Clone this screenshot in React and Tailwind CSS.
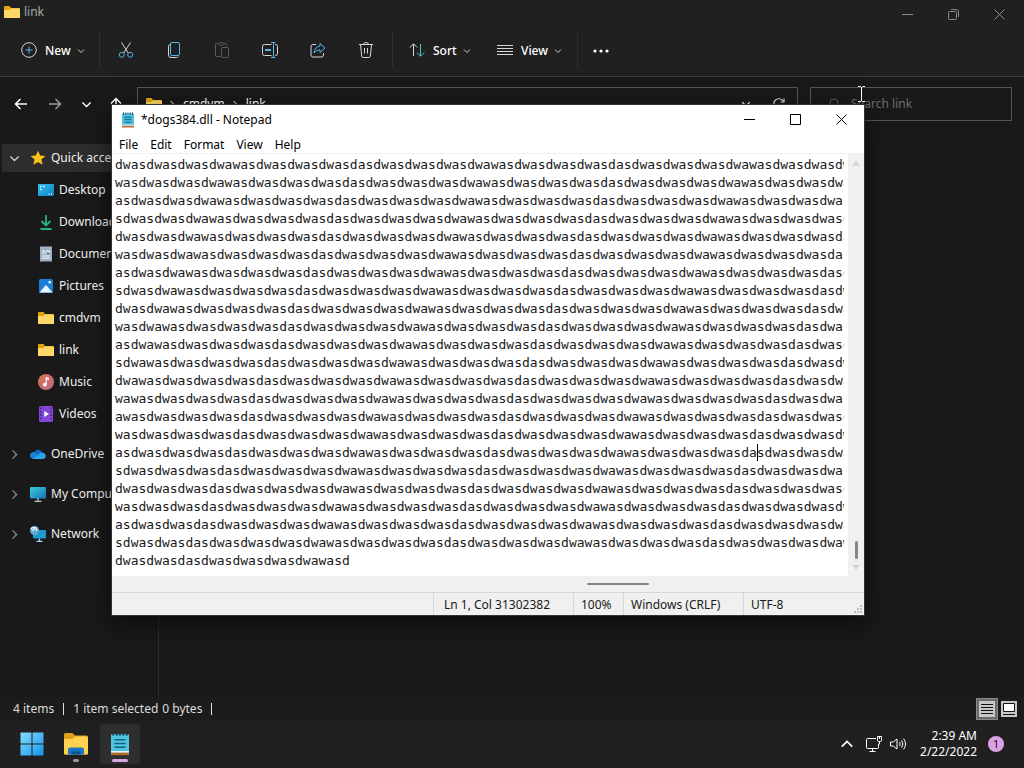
import React, { useState } from 'react'

const PATTERN = 'dwasdwasdwasdwawasdwasdwasdwasdas'

// every wrapped line starts one character further into the pattern
const buildLines = () => {
  const stream = PATTERN.repeat(5)
  const lines = []
  for (let i = 0; i < 22; i++) {
    lines.push(stream.slice(i, i + 96))
  }
  lines.push(stream.slice(22, 52))
  return lines.join('\n')
}

const FolderIcon = () => (
  <svg width="16" height="16" viewBox="0 0 16 16" className="shrink-0">
    <path d="M0 3a1 1 0 0 1 1-1h4.5L7 4h8a1 1 0 0 1 1 1v8a1 1 0 0 1-1 1H1a1 1 0 0 1-1-1z" fill="#e5a50f" />
    <path d="M0 6h5.5L7.2 4.4H15a1 1 0 0 1 1 1V13a1 1 0 0 1-1 1H1a1 1 0 0 1-1-1z" fill="#ffd968" />
  </svg>
)

const Chevron = ({ dir = 'down', size = 8, color = '#cfcfcf' }) => {
  const paths = {
    down: 'M1 2.5 4 5.5 7 2.5',
    right: 'M2.5 1 5.5 4 2.5 7',
    up: 'M1 5.5 4 2.5 7 5.5',
  }
  return (
    <svg width={size} height={size} viewBox="0 0 8 8" fill="none" stroke={color} className="shrink-0">
      <path d={paths[dir]} />
    </svg>
  )
}

const StarIcon = () => (
  <svg width="16" height="16" viewBox="0 0 16 16" className="shrink-0">
    <path d="m8 .8 2.1 4.8 5.3.5-4 3.5 1.2 5.2L8 12.1l-4.6 2.7 1.2-5.2-4-3.5 5.3-.5z" fill="#fcc419" />
  </svg>
)

const DesktopIcon = () => (
  <svg width="16" height="16" viewBox="0 0 16 16" className="shrink-0">
    <defs>
      <linearGradient id="desk" x1="0" y1="0" x2="1" y2="1">
        <stop offset="0" stopColor="#35c0ee" />
        <stop offset="1" stopColor="#0e7fc4" />
      </linearGradient>
    </defs>
    <rect y="2" width="16" height="12" rx="1" fill="url(#desk)" />
    <path d="M2 4.5h1.500M2 7.500h1.500M5 4.500h1.500M10.500 12h1M13 12h1" stroke="#e8faff" strokeWidth="1.300" />
  </svg>
)

const DownloadsIcon = () => (
  <svg width="16" height="16" viewBox="0 0 16 16" fill="none" stroke="#27b47c" strokeWidth="1.800" className="shrink-0">
    <path d="M8 1v10M3.500 7 8 11.400 12.500 7M2.500 15h11" />
  </svg>
)

const DocumentsIcon = () => (
  <svg width="16" height="16" viewBox="0 0 16 16" className="shrink-0">
    <path d="M2 .5h12v15H2z" fill="#9db2c6" />
    <path d="M4 5h3.500M4 7h3.500M4 10h8M4 12.200h8" stroke="#f4f8fb" />
    <path d="M8.500 4.500h3.500v3.500H8.500z" fill="#e9f1f7" />
    <path d="M9 6.500h2.500V8H9z" fill="#40607c" />
  </svg>
)

const PicturesIcon = () => (
  <svg width="16" height="16" viewBox="0 0 16 16" className="shrink-0">
    <rect x="1" y="1" width="14" height="14" rx="1.500" fill="#1b7fd4" />
    <path d="m1.500 14.600 5.700-6.800a1 1 0 0 1 1.600 0l5.700 6.800z" fill="#e9f6ff" />
    <circle cx="11.700" cy="4.300" r="1.300" fill="#fff" />
  </svg>
)

const MusicIcon = () => (
  <svg width="16" height="16" viewBox="0 0 16 16" className="shrink-0">
    <defs>
      <linearGradient id="music" x1="0" y1="0" x2="1" y2="1">
        <stop offset="0" stopColor="#e0714c" />
        <stop offset="1" stopColor="#b76a8e" />
      </linearGradient>
    </defs>
    <circle cx="8" cy="8" r="8" fill="url(#music)" />
    <path d="M8.200 3v7.200" stroke="#fff" strokeWidth="1.200" />
    <path d="M8 3l3 1v2L8 5z" fill="#fff" />
    <circle cx="6.800" cy="10.700" r="1.900" fill="#fff" />
  </svg>
)

const VideosIcon = () => (
  <svg width="16" height="16" viewBox="0 0 16 16" className="shrink-0">
    <rect x="1" width="14" height="16" rx="1.500" fill="#8347d6" />
    <path d="M3 1.500v13M13 1.500v13" stroke="#4a1f8c" strokeWidth="1.600" strokeDasharray="1.600 1.800" />
    <path d="M6.300 5v6l4.600-3z" fill="#fff" />
  </svg>
)

const OneDriveIcon = () => (
  <svg width="16" height="16" viewBox="0 0 16 16" className="shrink-0">
    <path d="M4.200 6.200A4.400 4.400 0 0 1 12.400 7L8 10 1 11a3.300 3.300 0 0 1 3.200-4.800z" fill="#0f6cbd" />
    <path d="M2 12.300 9.500 7.600A3.400 3.400 0 0 1 13 6.800a3.200 3.200 0 0 1 2 5.200 2.600 2.600 0 0 1-2 1H3.500A2.600 2.600 0 0 1 2 12.300z" fill="#2aa5ea" />
    <path d="M0 9.600a3.300 3.300 0 0 1 4.500-3.200l5 2.800L2 12.500A3.200 3.200 0 0 1 0 9.600z" fill="#1583d8" />
  </svg>
)

const ComputerIcon = () => (
  <svg width="16" height="16" viewBox="0 0 16 16" className="shrink-0">
    <defs>
      <linearGradient id="pc" x1="0" y1="0" x2="1" y2="1">
        <stop offset="0" stopColor="#3ccdd8" />
        <stop offset="1" stopColor="#1473b8" />
      </linearGradient>
    </defs>
    <rect y="1" width="16" height="11.500" rx="1" fill="url(#pc)" />
    <path d="M8 12v3M4.500 15.300h7" stroke="#b9c7cf" strokeWidth="1.300" />
  </svg>
)

const NetworkIcon = () => (
  <svg width="16" height="16" viewBox="0 0 16 16" className="shrink-0">
    <rect x="3" y="4" width="13" height="8.500" rx="1" fill="#1c9ad0" />
    <path d="M9.500 12.500v2.500M6.500 15.300h6" stroke="#a7dcef" strokeWidth="1.300" />
    <circle cx="4.500" cy="4.500" r="4.500" fill="#5fa9d6" />
    <path d="M1 3c1.500-2 3-2 3.500-1S3 3.500 2.500 5M6 .8c-1 2 1 2 .5 4" fill="none" stroke="#e9f6fc" strokeWidth="1.400" />
  </svg>
)

const NotepadIcon = ({ size = 16 }) => (
  <svg width={size} height={size} viewBox="0 0 16 16" className="shrink-0">
    <path d="M2 13h12v2.500H2z" fill="#b06a2a" />
    <path d="M2 1.500h12V13.500H2z" fill="#4fc3dd" />
    <path d="M2 13.200h12" stroke="#f1f7f9" />
    <path d="M3.500 .5v2M5.800.5v2M8 .5v2M10.300.5v2M12.500.5v2" stroke="#15405e" />
    <path d="M4.300 5.200h7.400M4.300 7.700h7.400M4.300 10.200h7.400" stroke="#11628a" />
  </svg>
)

const quickItems = [
  { name: 'Desktop', icon: <DesktopIcon /> },
  { name: 'Downloads', icon: <DownloadsIcon /> },
  { name: 'Documents', icon: <DocumentsIcon /> },
  { name: 'Pictures', icon: <PicturesIcon /> },
  { name: 'cmdvm', icon: <FolderIcon /> },
  { name: 'link', icon: <FolderIcon /> },
  { name: 'Music', icon: <MusicIcon /> },
  { name: 'Videos', icon: <VideosIcon /> },
]

const rootItems = [
  { name: 'OneDrive', icon: <OneDriveIcon /> },
  { name: 'My Computer', icon: <ComputerIcon /> },
  { name: 'Network', icon: <NetworkIcon /> },
]

const tools = [
  {
    name: 'Cut',
    icon: (
      <>
        <path d="M3.500.5 10.300 11M12.500.5 5.700 11" stroke="#d6d6d6" />
        <circle cx="3.800" cy="12.800" r="2.500" stroke="#58b6ea" />
        <circle cx="12.200" cy="12.800" r="2.500" stroke="#58b6ea" />
      </>
    ),
  },
  {
    name: 'Copy',
    icon: (
      <>
        <path d="M4 2.500a2 2 0 0 0-1.500 2v8.500a2.500 2.500 0 0 0 2.500 2.500h5.500a2 2 0 0 0 1.700-1" stroke="#d6d6d6" />
        <rect x="4.500" y=".5" width="9" height="13" rx="1.500" stroke="#58b6ea" />
      </>
    ),
  },
  {
    name: 'Paste',
    icon: (
      <g stroke="#5c5c5c">
        <path d="M6.500 14.500h-4a1 1 0 0 1-1-1v-11a1 1 0 0 1 1-1H4M10 1.500h1.500a1 1 0 0 1 1 1V4" />
        <rect x="4.500" y=".5" width="5" height="2.500" rx="1" />
        <rect x="7.500" y="5.500" width="7" height="10" rx="1" />
      </g>
    ),
  },
  {
    name: 'Rename',
    icon: (
      <>
        <path d="M9.500 2.500h-7a2 2 0 0 0-2 2v7a2 2 0 0 0 2 2h7M13 2.500h.5a2 2 0 0 1 2 2v7a2 2 0 0 1-2 2H13" stroke="#d6d6d6" />
        <path d="M9 .5h4.500M9 15.500h4.500M11.500.5v15" stroke="#58b6ea" />
        <path d="M3 8h6" stroke="#58b6ea" strokeWidth="2" />
      </>
    ),
  },
  {
    name: 'Share',
    icon: (
      <>
        <path d="M6 2.500H3a2 2 0 0 0-2 2V13a2 2 0 0 0 2 2h8.500a2 2 0 0 0 2-2v-2" stroke="#d6d6d6" />
        <path d="M10 1.500 15 6l-5 4.500V8C7 8 5.500 9 4 11c.3-4 2.500-6.500 6-7z" stroke="#58b6ea" strokeLinejoin="round" />
      </>
    ),
  },
  {
    name: 'Delete',
    icon: (
      <g stroke="#d6d6d6">
        <path d="M1 2.500h14M5.500 2.500a2.500 2 0 0 1 5 0M2.500 2.500l1.200 11.700a1.500 1.500 0 0 0 1.500 1.300h5.600a1.500 1.500 0 0 0 1.500-1.300L13.500 2.500M6.500 6v5.500M9.500 6v5.500" />
      </g>
    ),
  },
]

const Separator = () => <div className="h-9 w-px bg-[#2e2e2e]" />

const Explorer = () => {
  const [search, setSearch] = useState('')

  return (
    <main className="flex min-h-0 flex-1 flex-col bg-[#191919]">
      <header className="border-b border-[#3a3a3a] bg-[#202020]">
        <div className="flex h-6 items-start justify-between">
          <div className="flex h-6 items-center gap-1 pl-1 text-[#a8a8a8]">
            <FolderIcon />
            <span>link</span>
          </div>
          <div className="flex pr-[2px] text-[#8a8a8a]">
            <button aria-label="Minimize" className="flex h-7 w-[46px] items-center justify-center">
              <svg width="11" height="11" viewBox="0 0 11 11" stroke="currentColor"><path d="M0 5.500h11" /></svg>
            </button>
            <button aria-label="Restore" className="flex h-7 w-[46px] items-center justify-center">
              <svg width="11" height="11" viewBox="0 0 11 11" fill="none" stroke="currentColor">
                <rect x=".5" y="2.500" width="8" height="8" rx="1" />
                <path d="M3 .5h5.500a2 2 0 0 1 2 2V8" />
              </svg>
            </button>
            <button aria-label="Close" className="flex h-7 w-[46px] items-center justify-center">
              <svg width="11" height="11" viewBox="0 0 11 11" stroke="currentColor"><path d="m.5.5 10 10M10.500.5l-10 10" /></svg>
            </button>
          </div>
        </div>

        <div className="flex h-[52px] items-center pl-[13px] font-medium text-white">
          <button className="flex h-8 w-[86px] items-center gap-2 px-2">
            <svg width="16" height="16" viewBox="0 0 16 16" fill="none" className="shrink-0">
              <circle cx="8" cy="8" r="7.300" stroke="#d6d6d6" />
              <path d="M8 4.500v7M4.500 8h7" stroke="#58b6ea" />
            </svg>
            <span className="flex items-center gap-[6px] pt-[2px]">New <Chevron /></span>
          </button>
          <Separator />
          <div className="flex px-[2px]">
            {tools.map((tool) => (
              <button key={tool.name} aria-label={tool.name} className="flex h-8 w-12 items-center justify-center">
                <svg width="16" height="16" viewBox="0 0 16 16" fill="none">{tool.icon}</svg>
              </button>
            ))}
          </div>
          <Separator />
          <button className="ml-2 flex h-8 w-[88px] items-center gap-2 px-2">
            <svg width="16" height="16" viewBox="0 0 16 16" fill="none" className="shrink-0">
              <path d="M4.500 14V2M.8 5.500 4.500 1.800l3.700 3.700" stroke="#d6d6d6" />
              <path d="M11.500 2v12M7.800 10.500l3.700 3.700 3.700-3.700" stroke="#4cc2d8" />
            </svg>
            <span className="flex items-center gap-[6px] pt-[2px]">Sort <Chevron /></span>
          </button>
          <button className="flex h-8 w-[88px] items-center gap-2 px-2">
            <svg width="16" height="16" viewBox="0 0 16 16" stroke="#d6d6d6" className="shrink-0">
              <path d="M0 3.500h16M0 6.500h16M0 9.500h16M0 12.500h16" />
            </svg>
            <span className="flex items-center gap-[6px] pt-[2px]">View <Chevron /></span>
          </button>
          <Separator />
          <button aria-label="See more" className="flex h-8 w-[46px] items-center justify-center">
            <svg width="16" height="16" viewBox="0 0 16 16" fill="#fff">
              <circle cx="2" cy="9" r="1.600" />
              <circle cx="8" cy="9" r="1.600" />
              <circle cx="14" cy="9" r="1.600" />
            </svg>
          </button>
        </div>
      </header>

      <div className="flex h-11 items-end pr-3">
        <nav className="flex h-[34px] items-center pr-[7px] pl-1">
          <button aria-label="Back" className="flex h-8 w-[34px] items-center justify-center">
            <svg width="14" height="14" viewBox="0 0 14 14" fill="none" stroke="#fff" strokeWidth="1.500"><path d="M13 7H1.500M6.500 2l-5 5 5 5" /></svg>
          </button>
          <button aria-label="Forward" className="flex h-8 w-[34px] items-center justify-center">
            <svg width="14" height="14" viewBox="0 0 14 14" fill="none" stroke="#9a9a9a" strokeWidth="1.500"><path d="M1 7h11.500M7.500 2l5 5-5 5" /></svg>
          </button>
          <button aria-label="Recent locations" className="flex h-8 w-[29px] items-center justify-center">
            <Chevron size={11} color="#fff" />
          </button>
          <button aria-label="Up" className="flex h-8 w-[29px] items-center justify-center">
            <svg width="14" height="14" viewBox="0 0 14 14" fill="none" stroke="#fff" strokeWidth="1.500"><path d="M7 13V1.500M2 6.500l5-5 5 5" /></svg>
          </button>
        </nav>
        <div className="flex h-[34px] flex-1 items-center justify-between border border-[#555] pr-3 pl-2 text-white">
          <div className="flex items-center gap-[6px]">
            <FolderIcon />
            <Chevron dir="right" color="#fff" />
            <a href="#cmdvm" className="pl-px">cmdvm</a>
            <Chevron dir="right" color="#fff" />
            <a href="#link" className="pl-px">link</a>
          </div>
          <div className="flex items-center gap-[22px]">
            <button aria-label="Previous locations"><Chevron size={10} color="#fff" /></button>
            <button aria-label="Refresh">
              <svg width="12" height="12" viewBox="0 0 12 12" fill="none" stroke="#e0e0e0" strokeWidth="1.200">
                <path d="M10.500 7.500A5 5 0 1 1 10 3M11 .5V4H7.500" />
              </svg>
            </button>
          </div>
        </div>
        <label className="ml-3 flex h-[34px] w-[202px] items-center gap-3 border border-[#555] pl-4">
          <svg width="12" height="12" viewBox="0 0 12 12" fill="none" stroke="#5e5e5e" className="shrink-0">
            <circle cx="7" cy="5" r="4" />
            <path d="m4 8-3.500 3.500" />
          </svg>
          <input
            value={search}
            onChange={(e) => setSearch(e.target.value)}
            placeholder="Search link"
            aria-label="Search link"
            className="w-full min-w-0 bg-transparent text-white outline-none placeholder:text-[#6e6e6e]"
          />
        </label>
      </div>

      <div className="flex min-h-0 flex-1">
        <aside className="w-[159px] shrink-0 overflow-hidden border-r border-[#2b2b2b] pt-[21px] whitespace-nowrap text-[#f0f0f0]">
          <a href="#quick" className="my-[2px] ml-[2px] flex h-7 items-center bg-[#2d2d2d]">
            <span className="flex w-7 pl-[7px]"><Chevron size={11} color="#c8c8c8" /></span>
            <StarIcon />
            <span className="pl-[5px]">Quick access</span>
          </a>
          {quickItems.map((item) => (
            <a key={item.name} href={`#${item.name}`} className="flex h-8 items-center gap-[5px] pl-[38px]">
              {item.icon}
              {item.name}
            </a>
          ))}
          {rootItems.map((item) => (
            <a key={item.name} href={`#${item.name}`} className="mt-2 flex h-8 items-center">
              <span className="flex w-[30px] pl-[9px]"><Chevron dir="right" size={11} color="#8a8a8a" /></span>
              {item.icon}
              <span className="pl-[5px]">{item.name}</span>
            </a>
          ))}
        </aside>
        <section className="flex-1" />
      </div>

      <footer className="flex h-[23px] items-center justify-between bg-[#1c1c1c] pr-[7px] pl-[13px] text-[#dcdcdc]">
        <div className="flex items-center">
          <span>4 items</span>
          <span className="mx-[9px] h-3 w-px bg-[#e0e0e0]" />
          <span>1 item selected</span>
          <span className="pl-1">0 bytes</span>
          <span className="mx-[9px] h-3 w-px bg-[#e0e0e0]" />
        </div>
        <div className="flex items-center gap-[3px]">
          <button aria-label="Details view" className="flex size-[22px] items-center justify-center border border-[#8a8a8a] bg-[#6a6a6a]">
            <svg width="16" height="16" viewBox="0 0 16 16"><path d="M0 0h16v16H0z" fill="#c8c8c8" /><path d="M2 3.500h12M2 6.500h12M2 9.500h12M2 12.500h12" stroke="#111" /></svg>
          </button>
          <button aria-label="Large icons view" className="flex size-4 items-center justify-center">
            <svg width="16" height="16" viewBox="0 0 16 16"><path d="M0 0h16v16H0z" fill="#c8c8c8" /><path d="M2.500 2.500h11v8h-11z" fill="#fff" stroke="#111" /><path d="M2 13.500h12" stroke="#111" /></svg>
          </button>
        </div>
      </footer>
    </main>
  )
}

const Notepad = () => {
  const [text, setText] = useState(buildLines)

  return (
    <div className="absolute top-[105px] right-40 bottom-[153px] left-28 flex flex-col bg-[#f0f0f0] text-black shadow-[0_0_0_1px_#333,0_8px_24px_rgba(0,0,0,0.6)]">
      <div className="flex h-[29px] shrink-0 items-center justify-between bg-white">
        <div className="flex items-center gap-[5px] pl-2">
          <NotepadIcon />
          <span>*dogs384.dll - Notepad</span>
        </div>
        <div className="flex">
          <button aria-label="Minimize" className="flex h-7 w-[46px] items-center justify-center">
            <svg width="11" height="11" viewBox="0 0 11 11" stroke="#000"><path d="M0 5.500h11" /></svg>
          </button>
          <button aria-label="Maximize" className="flex h-7 w-[46px] items-center justify-center">
            <svg width="11" height="11" viewBox="0 0 11 11" fill="none" stroke="#000"><path d="M.5.5h10v10H.5z" /></svg>
          </button>
          <button aria-label="Close" className="flex h-7 w-[46px] items-center justify-center">
            <svg width="11" height="11" viewBox="0 0 11 11" stroke="#000"><path d="m.5.5 10 10M10.500.5l-10 10" /></svg>
          </button>
        </div>
      </div>
      <div className="flex h-5 shrink-0 items-center gap-3 border-b border-[#f0f0f0] bg-white pt-[2px] pl-[7px]">
        {['File', 'Edit', 'Format', 'View', 'Help'].map((menu) => (
          <button key={menu}>{menu}</button>
        ))}
      </div>

      <div className="flex min-h-0 flex-1">
        <div className="relative min-w-0 flex-1 bg-white pr-1">
          <textarea
            wrap="off"
            spellCheck={false}
            aria-label="Text editor"
            value={text}
            onChange={(e) => setText(e.target.value)}
            className="block h-full w-full resize-none overflow-hidden bg-white pt-[2px] pl-[3px] font-['DejaVu_Sans_Mono',monospace] text-[13px] leading-[18px] text-[#1a1a1a] outline-none"
          />
          {/* caret */}
          <div className="absolute top-[290px] left-[645px] h-[17px] w-px bg-black" />
        </div>
        <div className="flex w-4 flex-col items-center justify-between py-[6px]">
          <svg width="8" height="6" viewBox="0 0 8 6" fill="#d9d9d9"><path d="m4 0 4 6H0z" /></svg>
          <div className="flex flex-col items-center gap-[6px]">
            <div className="h-[18px] w-[3px] rounded-full bg-[#858585]" />
            <svg width="6" height="5" viewBox="0 0 6 5" fill="#cfcfcf"><path d="M0 0h6L3 5z" /></svg>
          </div>
        </div>
      </div>
      <div className="flex h-4 shrink-0 items-center justify-end pr-[215px]">
        <div className="h-[2px] w-[62px] rounded-full bg-[#858585]" />
      </div>
      <div className="flex h-[23px] shrink-0 border-t border-[#d7d7d7] leading-[23px] text-[#1a1a1a]">
        <span className="flex-1" />
        <span className="w-[140px] border-l border-[#d7d7d7] pl-[10px]">Ln 1, Col 31302382</span>
        <span className="w-[50px] border-l border-[#d7d7d7] pl-[7px]">100%</span>
        <span className="w-[120px] border-l border-[#d7d7d7] pl-[7px]">Windows (CRLF)</span>
        <span className="flex w-[121px] justify-between border-l border-[#d7d7d7] pl-[7px]">
          UTF-8
          <svg width="11" height="11" viewBox="0 0 11 11" fill="#bdbdbd" className="self-end">
            <path d="M7 1h2v2H7zM4 4h2v2H4zM7 4h2v2H7zM1 7h2v2H1zM4 7h2v2H4zM7 7h2v2H7z" />
          </svg>
        </span>
      </div>
    </div>
  )
}

const Taskbar = () => (
  <footer className="flex h-12 shrink-0 items-center justify-between bg-[#202020] pr-5 pl-3">
    <div className="flex gap-1">
      <button aria-label="Start" className="flex size-10 items-center justify-center">
        <svg width="24" height="24" viewBox="0 0 24 24">
          <defs>
            <linearGradient id="win" x1="0" y1="0" x2="1" y2="1">
              <stop offset="0" stopColor="#86defc" />
              <stop offset="1" stopColor="#1495ee" />
            </linearGradient>
          </defs>
          <path d="M.5.5h11v11H.5zM12.500.5h11v11h-11zM.5 12.500h11v11H.5zM12.500 12.500h11v11h-11z" fill="url(#win)" />
        </svg>
      </button>
      <button aria-label="File Explorer" className="relative flex size-10 items-center justify-center">
        <svg width="24" height="24" viewBox="0 0 24 24">
          <path d="M0 2.500a1.500 1.500 0 0 1 1.500-1.500h7L11 3.500h11.500A1.500 1.500 0 0 1 24 5v16a1.500 1.500 0 0 1-1.500 1.500h-21A1.500 1.500 0 0 1 0 21z" fill="#e0a01c" />
          <path d="M0 7h8.500L11 4.500h11.500A1.500 1.500 0 0 1 24 6v15a1.500 1.500 0 0 1-1.500 1.500h-21A1.500 1.500 0 0 1 0 21z" fill="#fdd250" />
          <path d="M4 22.500V18a2.500 2.500 0 0 1 2.500-2.500h11A2.500 2.500 0 0 1 20 18v4.500z" fill="#1877c4" />
          <path d="M7.500 22.500v-2a1 1 0 0 1 1-1h7a1 1 0 0 1 1 1v2z" fill="#0d5393" />
        </svg>
        <span className="absolute bottom-[2px] h-[3px] w-[6px] rounded-full bg-[#9a9a9a]" />
      </button>
      <button aria-label="Notepad" className="relative flex size-10 items-center justify-center rounded bg-[#2e2e2e]">
        <NotepadIcon size={24} />
        <span className="absolute bottom-[2px] h-[3px] w-4 rounded-full bg-[#d8a6e0]" />
      </button>
    </div>
    <div className="flex items-center text-white">
      <button aria-label="Show hidden icons" className="mr-3">
        <Chevron dir="up" size={14} color="#fff" />
      </button>
      <button aria-label="Network" className="mr-2">
        <svg width="16" height="16" viewBox="0 0 16 16" fill="none" stroke="#fff">
          <path d="M10 2.500H1.500a1 1 0 0 0-1 1v8a1 1 0 0 0 1 1h10a1 1 0 0 0 1-1V8M6.500 12.500v3M3.500 15.500h6M11.500.5h4v4a1 1 0 0 1-1 1h-2a1 1 0 0 1-1-1zM13.500 5.500V8h-1M13.500 1v2" />
        </svg>
      </button>
      <button aria-label="Volume" className="mr-[13px]">
        <svg width="17" height="16" viewBox="0 0 17 16" fill="none" stroke="#fff">
          <path d="M.5 6v4h2.700L7 13V3L3.200 6zM9.500 6a3.500 3.500 0 0 1 0 4M11.500 4.300a6 6 0 0 1 0 7.400M13.600 2.600a8.500 8.500 0 0 1 0 10.800" />
        </svg>
      </button>
      <div className="mr-[11px] text-right leading-4">
        <p>2:39 AM</p>
        <p>2/22/2022</p>
      </div>
      <span className="flex size-4 items-center justify-center rounded-full bg-[#d9a0e6] text-[10px] text-black">1</span>
    </div>
  </footer>
)

const App = () => (
  <div className="relative flex h-screen flex-col overflow-hidden bg-[#191919] font-['Noto_Sans',sans-serif] text-[12px] leading-4">
    <Explorer />
    <Taskbar />
    <Notepad />
    {/* text cursor over the search box */}
    <svg width="9" height="16" viewBox="0 0 9 16" fill="none" stroke="#fff" className="pointer-events-none absolute top-[86px] right-[158px]">
      <path d="M1 .5h2.500l1 1 1-1H8M4.500 1v14M1 15.500h2.500l1-1 1 1H8" />
    </svg>
  </div>
)

export default App
